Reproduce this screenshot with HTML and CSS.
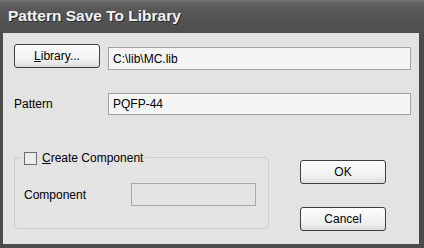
FILE: index.html
```html
<!DOCTYPE html>
<html lang="en">

<head>
    <meta charset="UTF-8">
    <meta name="viewport" content="width=device-width, initial-scale=1.0">
    <title>Pattern Save To Library</title>
    <link rel="stylesheet" href="styles.css">
</head>

<body>
    <div class="window">
        <div class="titlebar">Pattern Save To Library</div>
        <div class="client">
            <div class="row row-library">
                <button class="btn btn-library"><u>L</u>ibrary...</button>
                <input type="text" class="field field-library" value="C:\lib\MC.lib">
            </div>
            <div class="row row-pattern">
                <label class="label">Pattern</label>
                <input type="text" class="field field-pattern" value="PQFP-44">
            </div>
            <div class="lower">
                <div class="group">
                    <div class="legend">
                        <span class="check"></span>
                        <span><u>C</u>reate Component</span>
                    </div>
                    <div class="comp-row">
                        <label class="label">Component</label>
                        <input type="text" class="field field-comp" disabled>
                    </div>
                </div>
                <div class="actions">
                    <button class="btn">OK</button>
                    <button class="btn">Cancel</button>
                </div>
            </div>
        </div>
    </div>
</body>

</html>
```

FILE: styles.css
```css
        * {
            box-sizing: border-box;
        }

        body {
            margin: 0;
            font-family: "Liberation Sans", Arial, sans-serif;
            font-size: 12px;
            background: #4a4a4a;
        }

        .window {
            width: 424px;
            height: 248px;
            display: flex;
            flex-direction: column;
            background: #4b4b4b;
        }

        .titlebar {
            height: 33px;
            padding: 7px 0 0 8px;
            font-size: 15.5px;
            font-weight: bold;
            color: #f2f2f2;
            text-shadow: 1px 1px 0 #2a2a2a;
            background: linear-gradient(#7c7c7c 0, #666 2px, #585858 9px, #4e4e4e 100%);
        }

        .client {
            flex: 1;
            margin: 0 5px 4px 3px;
            padding: 11px 8px 0 11px;
            background: #e3e3e3;
        }

        .row {
            display: flex;
        }

        .row-library {
            align-items: flex-start;
        }

        .row-pattern {
            margin-top: 23px;
            align-items: center;
        }

        .btn {
            font-family: "Liberation Sans", Arial, sans-serif;
            font-size: 12px;
            color: #000;
            width: 86px;
            height: 24px;
            padding: 0;
            border: 1px solid #3e3e3e;
            border-radius: 3px;
            background: linear-gradient(#fdfdfd, #f0f0f0 70%, #dcdcdc);
        }

        .field {
            font-family: "Liberation Sans", Arial, sans-serif;
            font-size: 12px;
            color: #000;
            height: 23px;
            padding: 0 4px;
            border: 1px solid #a3a3a3;
            background: #f5f5f5;
            outline: none;
        }

        .field-library {
            margin: 3px 0 0 8px;
            flex: 1;
        }

        .label {
            width: 94px;
        }

        .field-pattern {
            flex: 1;
            height: 22px;
        }

        .lower {
            display: flex;
            margin-top: 42px;
        }

        .group {
            width: 255px;
            height: 72px;
            border: 1px solid #cdcdcd;
            border-radius: 4px;
        }

        .legend {
            display: flex;
            align-items: center;
            width: fit-content;
            height: 14px;
            margin: -7px 0 0 7px;
            padding: 0 2px;
            background: #e3e3e3;
        }

        .check {
            width: 13px;
            height: 13px;
            margin-right: 5px;
            border: 1px solid #6e6e6e;
            background: #ececec;
        }

        .comp-row {
            display: flex;
            align-items: center;
            margin: 18px 12px 0 9px;
        }

        .comp-row .label {
            width: 107px;
        }

        .field-comp {
            width: 125px;
            background: #e3e3e3;
            border-color: #a8a8a8;
        }

        .actions {
            display: flex;
            flex-direction: column;
            gap: 23px;
            margin: 3px 0 0 31px;
        }
```
